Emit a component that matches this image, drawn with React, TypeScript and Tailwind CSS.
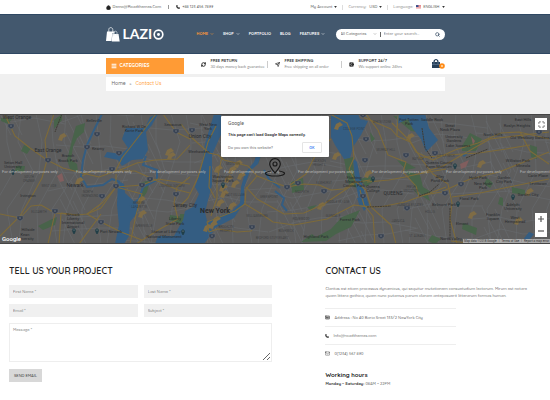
import type { ReactNode } from "react";
import { ChevronDown, House, LifeBuoy, Mail, Maximize, Menu, Phone, RefreshCw, Search, Send, IdCard } from "lucide-react";

const container = "mx-auto w-full max-w-[339px]";

function Caret() {
  return (
    <svg viewBox="0 0 4 3" className="h-[2px] w-[3px] fill-[#333]">
      <path d="M0 0h4L2 3z" />
    </svg>
  );
}

function TopBar() {
  return (
    <div className="bg-white text-[4px] leading-[14px] font-medium text-[#555]">
      <div className={`${container} flex h-[14px] items-center justify-between`}>
        <div className="flex items-center">
          <House className="mr-[2px] size-[5px] fill-[#222] text-[#222]" />
          <a href="#mail">Demo@Roadthemes.Com</a>
          <span className="mx-[7px] h-[4px] w-px bg-[#999]" />
          <Phone className="mr-[2px] size-[4px] fill-[#222] text-[#222]" />
          <a href="#phone">+88 123 456 7899</a>
        </div>
        <div className="flex items-center">
          <button className="flex items-center gap-[2px]">My Account <Caret /></button>
          <span className="mx-[5px] h-[5px] w-px bg-[#ddd]" />
          <span className="mr-[3px] text-[#888]">Currency:</span>
          <button className="flex items-center gap-[2px]">USD <Caret /></button>
          <span className="mx-[5px] h-[5px] w-px bg-[#ddd]" />
          <span className="mr-[3px] text-[#888]">Language:</span>
          <button className="flex items-center gap-[2px]">
            <svg viewBox="0 0 8 6" className="h-[4px] w-[5px]">
              <path fill="#fff" d="M0 0h8v6H0z" />
              <path stroke="#d43b45" d="M0 .5h8M0 2.5h8M0 4.5h8" />
              <path fill="#334d8c" d="M0 0h4v3H0z" />
            </svg>
            ENGLISH <Caret />
          </button>
        </div>
      </div>
    </div>
  );
}

const navItems = [
  { name: "HOME", menu: true, active: true },
  { name: "SHOP", menu: true, active: false },
  { name: "PORTFOLIO", menu: false, active: false },
  { name: "BLOG", menu: false, active: false },
  { name: "FEATURES", menu: true, active: false },
];

function Header() {
  return (
    <header className="border-y border-[#2f4863] bg-[#43586e]">
      <div className={`${container} flex h-[38px] items-center`}>
        <a href="#home" aria-label="Lazio" className="flex w-[91px] shrink-0 items-center text-white">
          <svg viewBox="0 0 14 15" className="mr-[3px] h-[15px] w-[14px]">
            <path d="M1 4.5h7.5v2H6.2L5.6 14H0z" fill="#fff" />
            <path d="M2.8 5V2.4C2.8 0 6.8 0 6.8 2.6V5" fill="none" stroke="#fff" strokeWidth=".7" />
            <path d="M6.3 7h6.2l1.2 7.5H5.8z" fill="#fff" />
            <path d="M7.8 8.5V5.7c0-2 3.2-2 3.2 0v2.8" fill="none" stroke="#d5dce3" strokeWidth=".7" />
          </svg>
          <span className="font-['Lato',sans-serif] text-[14px] leading-[16px] font-bold">LAZI</span>
          <svg viewBox="0 0 12 12" className="ml-px size-[11px]">
            <circle cx="6" cy="6" r="4.7" fill="none" stroke="#fff" strokeWidth="1.8" />
            <circle cx="6" cy="6" r="1.6" fill="#fff" />
          </svg>
        </a>
        <nav className="flex flex-1 items-center gap-[9px] text-[4px] font-bold">
          {navItems.map((item) => (
            <a key={item.name} href="#nav" className={item.active ? "flex items-center gap-[2px] text-[#ff9b35]" : "flex items-center gap-[2px] text-white"}>
              {item.name}
              {item.menu && <ChevronDown className="size-[4px]" strokeWidth={3} />}
            </a>
          ))}
        </nav>
        <form className="flex h-[11px] w-[109px] shrink-0 items-center rounded-full bg-white px-[5px] text-[4px] font-medium">
          <select aria-label="Category" className="w-[29px] appearance-none bg-transparent text-[#555]">
            <option>All Categories</option>
          </select>
          <ChevronDown className="ml-[3px] size-[4px] text-[#555]" />
          <span className="mx-[3px] h-[5px] w-px bg-[#666]" />
          <input aria-label="Search" placeholder="Enter your search..." className="min-w-0 flex-1 placeholder:text-[#777]" />
          <button type="button" aria-label="Search"><Search className="size-[5px] text-[#243c55]" strokeWidth={3} /></button>
        </form>
      </div>
    </header>
  );
}

function Service({ icon, title, text }: { icon: ReactNode; title: string; text: string }) {
  return (
    <div className="flex items-center gap-[5px] whitespace-nowrap">
      {icon}
      <div>
        <p className="text-[4px] leading-[6px] font-bold text-[#333]">{title}</p>
        <p className="font-['Lato',sans-serif] text-[4px] leading-[6px] text-[#888]">{text}</p>
      </div>
    </div>
  );
}

function ServiceBar() {
  return (
    <div className="bg-white">
      <div className={`${container} flex h-[20px] items-center`}>
        <button className="mt-[4px] mr-[17px] flex h-[16px] w-[78px] shrink-0 items-center gap-[3px] bg-[#ff9b35] px-[5px] text-[5px] font-bold text-white">
          <Menu className="size-[6px]" strokeWidth={4} /> CATEGORIES
        </button>
        <div className="flex flex-1 items-center">
          <div className="w-[66px]"><Service icon={<RefreshCw className="size-[5px] text-[#222]" strokeWidth={4} />} title="FREE RETURN" text="30 days money back guarantee" /></div>
          <span className="mr-[7px] h-[7px] w-px bg-[#ccc]" />
          <div className="w-[66px]"><Service icon={<Send className="size-[5px] text-[#222]" strokeWidth={3} />} title="FREE SHIPPING" text="Free shipping on all order" /></div>
          <span className="mr-[7px] h-[7px] w-px bg-[#ccc]" />
          <Service icon={<LifeBuoy className="size-[5px] text-[#222]" strokeWidth={4} />} title="SUPPORT 24/7" text="We support online 24hrs" />
        </div>
        <button aria-label="Cart">
          <svg viewBox="0 0 13 10" className="h-[10px] w-[13px]">
            <path d="M0 3h8v6H0z" fill="#263f58" />
            <path d="M2 5V2c0-2.2 4-2.2 4 0v3M0 5.5h8" fill="none" stroke="#58708a" strokeWidth=".8" />
            <path d="M2.2 3V2C2.2.2 5.8.2 5.8 2v1" fill="none" stroke="#263f58" />
            <circle cx="10" cy="7" r="2.8" fill="#ff8b17" />
            <circle cx="10" cy="7" r="1" fill="#ffe0bb" />
          </svg>
        </button>
      </div>
    </div>
  );
}

const water = [
  "M158 114L152 125L146 132L148 150L143 159L132 160L122 166L118 160L104 157L107 152L121 154L128 148L122 139L126 128L145 128L150 117Z",
  "M118 181L124 184L125 193L138 205L138 212L130 222L129 236L124 244H115L119 225L117 205Z",
  "M214 114H221L223 130L212 155L212 185L205 212L208 225L213 232L204 244H155L158 236L174 236L183 220L185 211L193 207L199 194L195 187L201 170L205 144Z",
  "M265 144L258 164L250 171L244 188L244 203L234 218L213 229L207 226L210 220L232 211L240 203L241 187L245 173L254 162L260 144Z",
  "M331 114H358L360 119L368 121L361 135L353 147L350 158L344 159L335 145L331 137Z",
  "M353 158L357 162L360 177L364 191L369 205L364 211L359 200L355 180Z",
  "M397 114H425L429 128L438 140L426 152L421 139L413 129L408 119L397 124Z",
  "M357 198L366 197L367 207L360 207Z",
  "M522 241L529 232L534 234L526 244H518Z",
  "M462 155L469 150L468 154L464 157Z",
];

const rivers = [
  "M102 114L95 128L87 145L83 160L81 177L87 187L103 185L112 179L120 182",
  "M146 156L143 165L157 170L157 180L143 187L139 199L130 206",
  "M275 191L284 198L282 205L287 211M264 170L269 179L280 188",
];

const parks = [
  "M1 118L12 119L8 124L1 121Z", "M54 120L62 114L62 120L54 129Z", "M76 126L85 123L84 132L77 138L73 147L71 160L77 164L78 172L70 169L67 160L72 140Z",
  "M24 145L31 148L27 154L21 151Z", "M38 226L50 220L57 217L55 225L43 230Z", "M140 183L150 180L147 192L139 204L142 189Z", "M170 215L184 217L182 224L169 220Z",
  "M120 195L127 201L117 199Z", "M254 163L260 149L263 150L258 164Z", "M291 182L303 178L304 190L292 193Z", "M344 159L353 157L354 174L364 191L349 185Z",
  "M307 207L317 205L311 211Z", "M301 242L312 234L316 237L331 229L342 217L360 210L351 227L336 234L326 241Z", "M393 116L407 117L418 132L411 131Z",
  "M405 170L420 175L423 187L433 193L422 195L416 189Z", "M412 188L418 195L428 195L430 201L422 196Z", "M462 146L470 133L482 139L476 151L462 151Z",
  "M530 145L537 147L537 159L531 157Z", "M500 197L503 198L503 206L498 204Z", "M463 223L477 228L476 235L462 229Z", "M397 160L407 163L416 168L406 170Z",
  "M432 235L441 239L435 244L428 241Z", "M360 179L370 176L374 181L366 187Z", "M180 214H190L189 226L180 224Z", "M16 166L25 166L24 172L15 171Z",
  "M512 187L525 190L525 195L512 193Z", "M487 178L493 183L490 188L484 184Z", "M370 132L375 139L371 142Z",
];

const majorRoads = [
  "M5 115L15 136L30 148L47 160L63 168L82 173L99 177L116 171L135 171L162 183L178 190L190 193",
  "M47 160L42 178L32 196L20 216L0 236M0 214L20 218L31 206L41 205L55 213L77 215L87 214L102 203L116 187L116 174",
  "M156 114L143 131L122 158L115 172L91 171L82 176M190 145L177 159L155 160L137 163L115 172",
  "M163 114L176 132L190 139M116 187L142 185L158 179L190 184M116 187L101 208L87 214L101 222L121 232L142 240",
  "M101 214L79 244M116 187L142 194L136 215L130 244M55 213L48 244M77 215L61 213L59 244",
  "M54 114L45 140L47 160M190 177L177 187L174 203L178 219L160 229L136 244",
  "M181 124L191 137L209 153L218 155L224 160L248 166L257 176L270 181L287 187L304 184L319 185L331 190L344 189L353 183L370 180",
  "M257 176L246 189L245 204L235 211L207 222L209 232L218 229L237 232L251 231L254 227M245 204L260 213L273 222L294 225L327 219L354 205L369 207",
  "M330 114L347 123L352 136L354 158L349 169L355 181L366 190L371 207L391 225L396 244",
  "M366 114L378 130L388 155L406 162L403 172L416 186L419 196L441 192L470 179L499 172L549 152",
  "M363 117L391 129L397 136L410 142L416 152L433 160L455 150L478 143L501 133L519 132L549 139",
  "M392 123L410 141L422 160L433 174L448 184L452 203L450 219L457 244M452 197L480 193L509 187L549 179",
  "M360 206L380 207L405 202L430 193L446 187M367 182L389 180L405 177L418 174L446 169",
  "M418 158L447 155L479 153L506 149L530 145M421 173L443 166L474 148L490 139L549 132M397 136L398 114",
  "M181 205L188 198L193 188L198 177L203 160L208 142L216 126M210 166L209 187L215 198M222 156L217 181L217 198L211 216",
  "M331 139L317 152L306 174L287 187M354 184L324 204L304 213L284 214L257 199L246 187",
  "M451 241L468 243M520 132L530 151L549 164M360 190L364 205L373 216L375 244",
];

const minorRoads = Array.from({ length: 42 }, (_, i) => {
  const x = i * 15 - 24;
  const bend = (i * 17) % 13;
  return `M${x} 114L${x + 9 - bend} 142L${x + bend} 171L${x - 14} 209L${x - 20 + bend} 244`;
});
const crossRoads = Array.from({ length: 48 }, (_, i) => {
  const x = ((i * 71) % 570) - 15;
  const y = 116 + ((i * 29) % 126);
  return `M${x} ${y}l27 ${6 - (i % 5) * 4}l22 ${-4 + (i % 4) * 3}l31 ${6 - (i % 7) * 2}M${x + 10} ${y - 12}l16 31M${x + 23} ${y - 10}l14 29`;
});

type Label = [string, number, number, number?];
const labels: Label[] = [
  ["West Orange", 17, 119, 5], ["East Orange", 48, 152, 5], ["Belleville", 94, 122], ["Kearny", 98, 150], ["Branch", 68, 157], ["Brook Park", 68, 162],
  ["Richard W De", 134, 128], ["Korte Park", 134, 132], ["Secaucus", 173, 126], ["Seton Hall", 13, 164], ["University", 13, 168], ["SOUTH", 29, 178, 3], ["ORANGE", 29, 182, 3],
  ["Newark", 75, 187, 5], ["WEST SIDE", 49, 187, 3], ["Irvington", 28, 197], ["NORTH", 88, 193, 3], ["IRONBOUND", 90, 197, 3], ["Newark", 73, 216], ["Liberty", 73, 220],
  ["International", 73, 224], ["Airport", 73, 228], ["Port Newark", 111, 233], ["Hillside", 28, 231], ["Kean", 25, 236], ["University", 25, 240], ["ELIZABETH", 39, 213, 3],
  ["BERGEN-", 139, 204, 3], ["LAFAYETTE", 139, 208, 3], ["GREENVILLE", 144, 227, 3], ["JOURNAL SQUARE", 172, 187, 3], ["Liberty", 175, 220], ["State Park", 175, 225],
  ["Statue of Liberty", 166, 233], ["National Monument", 164, 238], ["Jersey City", 185, 207, 5], ["West New", 208, 126], ["York", 208, 130], ["Union City", 200, 138, 5],
  ["Weehawken", 199, 153], ["MIDTOWN", 233, 165, 3], ["Washington", 223, 178], ["Square Park", 223, 182], ["New York", 215, 213, 7], ["EAST VILLAGE", 235, 196, 3], ["GREENPOINT", 269, 198, 3],
  ["WILLIAMSBURG", 257, 217, 3], ["BROOKLYN", 226, 228, 3], ["HEIGHTS", 226, 232, 3], ["JACKSON", 319, 162, 3], ["HEIGHTS", 319, 166, 3], ["ELMHURST", 324, 184, 3], ["MASPETH", 302, 193, 3],
  ["RIDGEWOOD", 301, 220, 3], ["BUSHWICK", 286, 232, 3], ["BEDFORD-STUYVESANT", 272, 239, 3], ["Highland Park", 316, 238], ["Forest Park", 350, 221], ["MIDDLE VILLAGE", 338, 203, 3],
  ["GLENDALE", 333, 217, 3], ["Flushing", 354, 179], ["Meadows", 354, 183], ["Corona Park", 354, 187], ["COLLEGE POINT", 354, 130, 3], ["WHITESTONE", 382, 123, 3], ["MURRAY HILL", 386, 151, 3],
  ["Fort Totten", 409, 121], ["Park", 409, 125], ["Saddle Rock", 432, 121], ["Great", 450, 127], ["Neck Plaza", 450, 131], ["University", 454, 138], ["Gardens", 454, 142], ["Lake Success", 458, 147],
  ["North Hills", 493, 136], ["Roslyn Heights", 517, 127], ["Old Westbury Gardens", 530, 139], ["East Hills", 523, 121], ["LITTLE NECK", 446, 157, 3], ["BAYSIDE", 418, 160, 3],
  ["Queens County", 439, 164], ["Farm Museum", 439, 168], ["Alley", 440, 178], ["Pond Park", 440, 182],
  ["Hyde Park", 478, 179], ["Garden", 504, 179], ["City Park", 504, 183],
  ["Williston Park", 518, 162], ["Mineola", 523, 167], ["Carle Place", 538, 177], ["New Hyde", 483, 185], ["Park", 483, 189], ["Floral Park", 469, 200], ["Belmont Park", 444, 206],
  ["Garden City", 528, 196], ["Adelphi", 513, 206], ["University", 513, 210], ["QUEENS", 393, 195, 5], ["Queens", 373, 188], ["College", 373, 192], ["JAMAICA ESTATES", 410, 206, 3],
  ["JAMAICA", 398, 222, 3], ["HOLLIS", 430, 213, 3], ["ST. ALBANS", 417, 237, 3], ["Elmont", 462, 225], ["Franklin", 493, 216], ["Square", 493, 220], ["West", 515, 219], ["Hempstead", 515, 223],
  ["North Valley", 451, 240], ["Levittown", 538, 185], ["FRESH", 411, 188, 3], ["MEADOWS", 411, 192, 3],
];
const shields = [[11, 126], [48, 160], [97, 134], [87, 147], [112, 169], [116, 186], [119, 153], [150, 179], [142, 185], [102, 196], [55, 211], [20, 218], [101, 222], [176, 131], [176, 194], [192, 130], [212, 236], [252, 227], [287, 187], [298, 183], [324, 191], [363, 196], [366, 139], [365, 160], [406, 155], [445, 193], [435, 153], [461, 184], [539, 132], [381, 236], [407, 208], [363, 115]];
const pins = [[74, 231], [97, 231], [183, 232], [223, 185], [455, 166], [458, 204], [513, 197], [373, 179], [13, 172]];
const districts = [[60, 135], [77, 179], [167, 150], [169, 154], [139, 198], [140, 212], [216, 167], [230, 168], [226, 177], [239, 174], [211, 223], [222, 192], [205, 226], [336, 124], [334, 154], [366, 172], [479, 162], [527, 190], [470, 213], [516, 219], [319, 204], [233, 182], [408, 135], [218, 201], [236, 162], [221, 186], [214, 218], [230, 204]];

function MapDrawing() {
  return (
    <svg viewBox="0 114 550 130" preserveAspectRatio="xMidYMid slice" className="absolute inset-0 size-full" aria-label="Map of New York">
      <path fill="#5d5d5d" d="M0 114h550v130H0z" />
      <path d={crossRoads.join("")} fill="none" stroke="#6b6e72" strokeWidth=".5" />
      <path d={minorRoads.join("")} fill="none" stroke="#6b6e72" strokeWidth=".5" />
      {parks.map((d) => <path key={d} d={d} fill="#48634a" />)}
      {water.map((d) => <path key={d} d={d} fill="#345d82" />)}
      {rivers.map((d) => <path key={d} d={d} fill="none" stroke="#345d82" strokeWidth="2" />)}
      <path fill="#815e5e" d="M57 176l5-3 2 8-4 1zM460 164l9-4-3 7-5 2zM471 136l4 5-2 4z" />
      <g fill="#7f6c45">
        {districts.map(([x, y]) => (
          <path key={`${x}-${y}`} d={`M${x} ${y}l4-2 3 3-4 2-1 3-4-1z`} />
        ))}
      </g>
      {majorRoads.map((d) => <path key={d} d={d} fill="none" stroke="#7d6a3a" strokeWidth="1.1" strokeLinejoin="round" />)}
      <path d="M62 114L58 124L55 132M422 128L425 148L432 158M466 158L488 149M419 196L430 192L439 184M450 208V240M367 207L391 206" fill="none" stroke="#3f3b34" strokeWidth="1" strokeDasharray="2 .6" />
      {shields.map(([x, y]) => (
        <g key={`${x}-${y}`}><path d={`M${x - 3} ${y - 2}h6v3l-3 2-3-2z`} fill="#384252" stroke="#6d727a" strokeWidth=".4" /><path d={`M${x - 1} ${y}h2`} stroke="#92969b" strokeWidth=".6" /></g>
      ))}
      {pins.map(([x, y]) => (
        <g key={`${x}-${y}`}><path d={`M${x} ${y + 3}c-5-7 5-7 0 0`} fill="#203e46" stroke="#203e46" strokeWidth=".7" /><circle cx={x} cy={y - 1} r=".6" fill="#999" /></g>
      ))}
      <g textAnchor="middle" fill="#2a2c2f" className="font-['Roboto',sans-serif]">
        {labels.map(([text, x, y, size = 4], i) => (
          <text key={i} x={x} y={y} fontSize={size} fontWeight={size > 5 ? 700 : 400} fillOpacity={size === 3 ? 0.6 : 1}>{text}</text>
        ))}
      </g>
      <g fill="#b5b5b5" fontSize="4" className="font-['Roboto',sans-serif]">
        {[2, 76, 150, 224, 298, 372, 446, 520].map((x) => <text key={x} x={x} y="173">For development purposes only</text>)}
      </g>
      <g fill="none" stroke="#1b1b1b" strokeWidth="1.2">
        <path d="M271 171c-10 1.500-5 5 4 5s14-3.500 4-5" />
        <path d="M275 173c-3.500-4-5.300-6.500-5.300-9a5.300 5.300 0 0 1 10.600 0c0 2.500-1.800 5-5.300 9z" fill="#626262" />
        <circle cx="275" cy="164" r="2" />
      </g>
    </svg>
  );
}

function MapPanel() {
  return (
    <section className="relative h-[130px] overflow-hidden border-y border-[#454545]">
      <MapDrawing />
      <div role="dialog" aria-label="Google Maps" className="relative mx-auto mt-px flex h-[41px] w-[108px] flex-col justify-between rounded-[1px] bg-white px-[7px] pt-[4px] pb-[4px] font-['Roboto',sans-serif] text-[4px] shadow">
        <p className="text-[5px] leading-[7px] text-[#555]">Google</p>
        <p className="whitespace-nowrap leading-[8px] font-medium text-[#222]">This page can't load Google Maps correctly.</p>
        <div className="flex items-center justify-between">
          <a href="#owner" className="text-[#777]">Do you own this website?</a>
          <button className="h-[11px] w-[20px] rounded-[1px] border border-[#e5e5e5] leading-[9px] font-medium text-[#4285f4]">OK</button>
        </div>
      </div>
      <button aria-label="Full screen" className="absolute top-[3px] right-[3px] flex size-[12px] items-center justify-center bg-white text-[#555]"><Maximize className="size-[7px]" strokeWidth={3} /></button>
      <div className="absolute right-[3px] bottom-[6px] flex w-[12px] flex-col bg-white">
        {["Zoom in", "Zoom out"].map((name, i) => (
          <button key={name} aria-label={name} className="flex h-[12px] items-center justify-center">
            <svg viewBox="0 0 6 6" className="size-[6px]"><path d={i === 0 ? "M0 3h6M3 0v6" : "M0 3h6"} stroke="#555" strokeWidth="1.2" /></svg>
          </button>
        ))}
      </div>
      <span className="absolute bottom-0 left-[2px] font-['Roboto',sans-serif] text-[6px] leading-[8px] font-medium text-white">Google</span>
      <span className="absolute right-0 bottom-0 flex h-[4px] items-center gap-[2px] bg-[#aaa] px-px font-['Roboto',sans-serif] text-[3px] leading-[4px] text-[#333]">
        <span>Map data ©2018 Google</span><span>|</span><a href="#terms">Terms of Use</a><span>|</span><a href="#report">Report a map error</a>
      </span>
    </section>
  );
}

const heading = "text-[9px] leading-[12px] font-semibold text-[#222]";
const field = "h-[13px] min-w-0 bg-[#f0f0f0] px-[4px] text-[#555] placeholder:text-[#777]";

function ContactForm() {
  return (
    <form className="flex flex-col items-start text-[4px] font-medium">
      <h2 className={heading}>TELL US YOUR PROJECT</h2>
      <div className="mt-[8px] grid w-full grid-cols-2 gap-[6px]">
        {["First Name *", "Last Name *", "Email *", "Subject *"].map((name) => <input key={name} aria-label={name} placeholder={name} className={field} />)}
      </div>
      <textarea aria-label="Message" placeholder="Message *" className="mt-[6px] h-[39px] w-full border border-[#eee] p-[3px] leading-[6px] placeholder:text-[#777]" />
      <button type="button" className="mt-[7px] h-[13px] w-[33px] bg-[#d8d8d8] whitespace-nowrap text-[#333]">SEND EMAIL</button>
    </form>
  );
}

function ContactDetails() {
  const row = "flex h-[18px] items-center gap-[4px] border-t border-[#eee]";
  return (
    <section className="text-[4px] font-medium text-[#666]">
      <h2 className={heading}>CONTACT US</h2>
      <p className="mt-[8px] pr-[16px] leading-[7px]">Claritas est etiam processus dynamicus, qui sequitur mutationem consuetudium lectorum. Mirum est notare quam littera gothica, quam nunc putamus parum claram anteposuerit litterarum formas human.</p>
      <address className="mt-[9px] w-[131px] not-italic">
        <p className={row}><IdCard className="size-[5px] text-[#333]" strokeWidth={3} />Address : No 40 Baria Sreet 133/2 NewYork City</p>
        <p className={row}><Phone className="size-[4px] fill-[#333] text-[#333]" /><a href="#mail">Info@roadthemes.com</a></p>
        <p className={row}><Mail className="size-[5px] text-[#333]" /><a href="#phone">0(1234) 567 890</a></p>
      </address>
      <h3 className="mt-[8px] text-[6px] leading-[10px] font-bold text-[#222]">Working hours</h3>
      <p className="leading-[7px]"><strong className="font-bold text-[#333]">Monday – Saturday:</strong> 08AM – 22PM</p>
    </section>
  );
}

export default function App() {
  return (
    <div className="min-h-screen bg-white font-['Quicksand','Lato',sans-serif]">
      <TopBar />
      <Header />
      <ServiceBar />
      <div className="bg-[#f0f0f0] pt-[3px] pb-[23px]">
        <nav aria-label="Breadcrumb" className={`${container} flex h-[14px] items-center gap-[4px] bg-white px-[6px] text-[5px] font-medium text-[#666]`}>
          <a href="#home">Home</a><span className="text-[4px]">»</span><span className="text-[#ff9b35]">Contact Us</span>
        </nav>
      </div>
      <MapPanel />
      <main className="grid grid-cols-[6fr_5fr] gap-[53px] pt-[21px] pr-[5px] pb-[12px] pl-[9px]">
        <ContactForm />
        <ContactDetails />
      </main>
    </div>
  );
}
